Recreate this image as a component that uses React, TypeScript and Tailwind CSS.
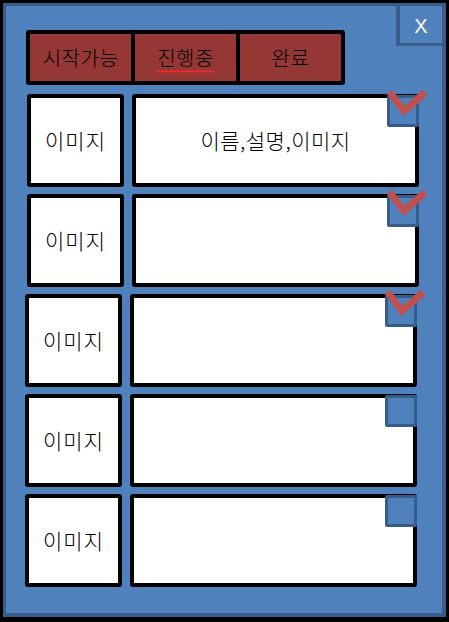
import React from "react";

const rows = [
  { shift: "ml-[2px]", checked: true, label: "이름,설명,이미지" },
  { shift: "ml-[2px]", checked: true, label: "" },
  { shift: "ml-0", checked: true, label: "" },
  { shift: "ml-0", checked: false, label: "" },
  { shift: "ml-0", checked: false, label: "" },
];

function CheckBox({ checked }: { checked: boolean }) {
  return (
    <div className="absolute right-[-4px] top-[-3px] w-[32px] h-[32px] border-[3px] border-[#385d8a] bg-[#4f81bd] rounded-[2px]">
      {checked && (
        <svg
          className="absolute left-[-7px] top-[-12px] overflow-visible"
          width="48"
          height="32"
          viewBox="0 0 48 32"
        >
          <polyline
            points="6.5,6 21,25 42,6.5"
            fill="none"
            stroke="#c0504d"
            strokeWidth="7"
            strokeLinecap="butt"
            strokeLinejoin="miter"
          />
        </svg>
      )}
    </div>
  );
}

// spell-check squiggle under 진행중
function Squiggle() {
  const pts: string[] = [];
  for (let x = 0; x <= 58; x += 2) pts.push(`${x},${(x / 2) % 2 === 0 ? 3.5 : 1.5}`);
  return (
    <svg className="absolute left-[-1px] top-[24px] block" width="58" height="5" viewBox="0 0 58 5">
      <polyline points={pts.join(" ")} fill="none" stroke="#ff2a2a" strokeWidth="1.2" />
    </svg>
  );
}

export default function App() {
  return (
    <div className="min-h-screen bg-black p-[3px] font-['Noto_Sans_CJK_KR','Noto_Sans',sans-serif] font-light text-black">
      <div className="relative w-[443px] h-[614px] border-[3px] border-r-[4px] border-b-[4px] border-[#385d8a] bg-[#4f81bd] pt-[24px] pl-[19px]">
        {/* close */}
        <div className="absolute top-0 right-0 w-[46px] h-[40px] border-l-[4px] border-b-[3px] border-[#385d8a] flex items-center justify-center pt-[2px] text-white text-[20px] font-normal font-['Liberation_Sans',sans-serif]">
          X
        </div>

        {/* tabs */}
        <div className="ml-[1px] w-[319px] h-[55px] bg-black p-[4px] flex gap-[4px] rounded-[3px]">
          <div className="flex-1 bg-[#953735] flex items-center justify-center text-[20px] tracking-[0.5px]">
            시작가능
          </div>
          <div className="flex-1 bg-[#953735] flex items-center justify-center text-[20px] tracking-[0.5px]">
            <span className="relative inline-block leading-[26px]">
              진행중
              <Squiggle />
            </span>
          </div>
          <div className="flex-1 bg-[#953735] flex items-center justify-center text-[20px] tracking-[0.5px]">
            완료
          </div>
        </div>

        {/* list */}
        <div className="mt-[9px] flex flex-col gap-[7px]">
          {rows.map((r, i) => (
            <div key={i} className={`flex gap-[8px] h-[93px] ${r.shift}`}>
              <div className="w-[97px] h-full bg-white border-[4px] border-black rounded-[3px] flex items-center justify-center text-[21px] tracking-[1px]">
                이미지
              </div>
              <div className="relative w-[287px] h-full bg-white border-[4px] border-black rounded-[3px] flex items-center justify-center text-[21px] tracking-[0.5px]">
                {r.label}
                <CheckBox checked={r.checked} />
              </div>
            </div>
          ))}
        </div>
      </div>
    </div>
  );
}
